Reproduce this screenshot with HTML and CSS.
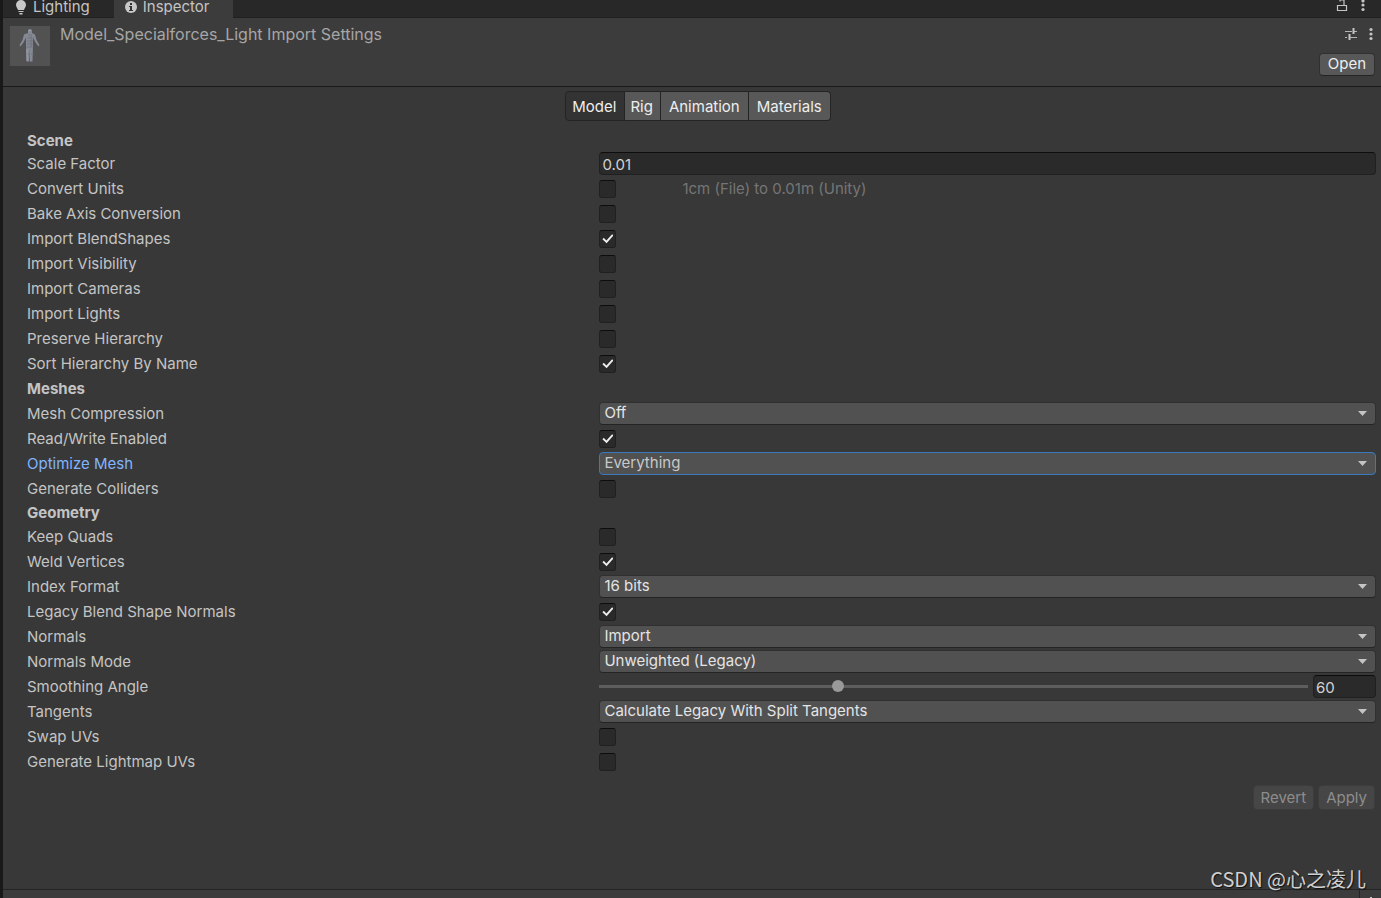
FILE: index.html
```html
<!DOCTYPE html>
<html lang="en">
<head>
    <meta charset="UTF-8">
    <meta name="viewport" content="width=device-width, initial-scale=1.0">
    <title>Inspector</title>
    <link rel="stylesheet" href="styles.css">
</head>
<body>
    <nav class="window-tabs">
        <button class="window-tab lighting">
            <svg width="12" height="16" viewBox="0 0 12 16"><path d="M6 1a5 5 0 0 0-5 5c0 2 1.500 3 2 5h6c.5-2 2-3 2-5a5 5 0 0 0-5-5zM3.500 12h5v1h-5zM4.500 14h3v1.500h-3z" fill="#c8c8c8"/></svg>
            Lighting
        </button>
        <button class="window-tab active">
            <svg width="12" height="12" viewBox="0 0 12 12"><circle cx="6" cy="6" r="6" fill="#c8c8c8"/><path d="M5 2h2v2H5zM4 5h3v4h1v1H4V9h1V6H4z" fill="#333"/></svg>
            Inspector
        </button>
        <div class="window-tools">
            <button class="icon-button" aria-label="Lock">
                <svg width="12" height="14" viewBox="0 0 12 14"><path d="M4 2.500V1h4v5M1.500 6.500h9v5h-9z" fill="none" stroke="#c4c4c4" stroke-width="1.200"/></svg>
            </button>
            <button class="icon-button" aria-label="Window menu">
                <svg width="4" height="14" viewBox="0 0 4 14"><g fill="#c4c4c4"><circle cx="2" cy="2" r="1.600"/><circle cx="2" cy="6" r="1.600"/><circle cx="2" cy="10.500" r="1.600"/></g></svg>
            </button>
        </div>
    </nav>

    <header class="asset-header">
        <svg class="preview" width="40" height="40" viewBox="0 0 40 40">
            <path d="M0 0h40v40H0z" fill="#525252"/>
            <path d="M18 7q-.5-4 2-4t2 4l3 1.500 1.500 5.500 3 5-1 1.500-3-4-2.500-5v9l-.5 15h-2.500l-.3-13-.4 13h-2.500l-.8-15v-9l-2.500 5-3 4-1-1.500 3-5 1.500-5.500z" fill="#858994"/>
            <path d="M18 9h4M17 12h6M17 15h6M17 18h6M16.500 21h7M16 28h3M21 28h3M21 10v11" stroke="#696e79" stroke-width=".8" fill="none"/>
            <path d="M18.500 4.500h2M17 23v12" stroke="#a0a4ae" fill="none"/>
        </svg>
        <h1>Model_Specialforces_Light Import Settings</h1>
        <div class="header-side">
            <div class="header-tools">
                <button class="icon-button" aria-label="Presets">
                    <svg width="12" height="12" viewBox="0 0 12 12"><path d="M0 3.500h7M9 3.500h3M0 9.500h2M5 9.500h7" stroke="#b4b4b4" fill="none"/><path d="M8.500 0v6M4.500 6v6" stroke="#c4c4c4" stroke-width="2" fill="none"/></svg>
                </button>
                <button class="icon-button" aria-label="More">
                    <svg width="4" height="14" viewBox="0 0 4 14"><g fill="#c4c4c4"><circle cx="2" cy="2.500" r="1.600"/><circle cx="2" cy="7" r="1.600"/><circle cx="2" cy="11.500" r="1.600"/></g></svg>
                </button>
            </div>
            <button class="button">Open</button>
        </div>
    </header>

    <main>
        <div class="mode-tabs">
            <button class="selected">Model</button>
            <button>Rig</button>
            <button>Animation</button>
            <button>Materials</button>
        </div>

        <form class="settings">
            <h2 class="scene">Scene</h2>
            <div class="row"><label for="scale">Scale Factor</label><input type="text" id="scale" value="0.01"></div>
            <div class="row"><label for="units">Convert Units</label><input type="checkbox" id="units"><span class="hint">1cm (File) to 0.01m (Unity)</span></div>
            <div class="row"><label for="bake">Bake Axis Conversion</label><input type="checkbox" id="bake"></div>
            <div class="row"><label for="blend">Import BlendShapes</label><input type="checkbox" id="blend" checked></div>
            <div class="row"><label for="visibility">Import Visibility</label><input type="checkbox" id="visibility"></div>
            <div class="row"><label for="cameras">Import Cameras</label><input type="checkbox" id="cameras"></div>
            <div class="row"><label for="lights">Import Lights</label><input type="checkbox" id="lights"></div>
            <div class="row"><label for="preserve">Preserve Hierarchy</label><input type="checkbox" id="preserve"></div>
            <div class="row"><label for="sort">Sort Hierarchy By Name</label><input type="checkbox" id="sort" checked></div>

            <h2 class="meshes">Meshes</h2>
            <div class="row"><label for="compression">Mesh Compression</label><div class="dropdown"><select id="compression"><option>Off</option><option>Low</option><option>Medium</option><option>High</option></select></div></div>
            <div class="row"><label for="readwrite">Read/Write Enabled</label><input type="checkbox" id="readwrite" checked></div>
            <div class="row focused"><label for="optimize">Optimize Mesh</label><div class="dropdown"><select id="optimize"><option>Everything</option><option>Nothing</option></select></div></div>
            <div class="row"><label for="colliders">Generate Colliders</label><input type="checkbox" id="colliders"></div>

            <h2 class="geometry">Geometry</h2>
            <div class="row"><label for="quads">Keep Quads</label><input type="checkbox" id="quads"></div>
            <div class="row"><label for="weld">Weld Vertices</label><input type="checkbox" id="weld" checked></div>
            <div class="row"><label for="index">Index Format</label><div class="dropdown"><select id="index"><option>16 bits</option><option>32 bits</option></select></div></div>
            <div class="row"><label for="legacy">Legacy Blend Shape Normals</label><input type="checkbox" id="legacy" checked></div>
            <div class="row"><label for="normals">Normals</label><div class="dropdown"><select id="normals"><option>Import</option><option>Calculate</option><option>None</option></select></div></div>
            <div class="row"><label for="mode">Normals Mode</label><div class="dropdown"><select id="mode"><option>Unweighted (Legacy)</option><option>Unweighted</option></select></div></div>
            <div class="row"><label for="angle">Smoothing Angle</label><input type="range" id="angle" min="0" max="180" value="60"><input type="text" class="number" aria-label="Smoothing Angle value" value="60"></div>
            <div class="row"><label for="tangents">Tangents</label><div class="dropdown"><select id="tangents"><option>Calculate Legacy With Split Tangents</option><option>None</option></select></div></div>
            <div class="row"><label for="swap">Swap UVs</label><input type="checkbox" id="swap"></div>
            <div class="row"><label for="lightmap">Generate Lightmap UVs</label><input type="checkbox" id="lightmap"></div>

            <div class="actions">
                <button type="button" class="button" disabled>Revert</button>
                <button type="button" class="button" disabled>Apply</button>
            </div>
        </form>
    </main>

    <footer class="preview-bar"><div class="preview-menu"></div></footer>
    <div class="watermark">CSDN @心之凌儿</div>
</body>
</html>
```
FILE: styles.css
```css
* {
    box-sizing: border-box;
}

body {
    margin: 0;
    min-height: 100vh;
    display: flex;
    flex-direction: column;
    position: relative;
    border-left: 3px solid #191919;
    background: #383838;
    color: #c4c4c4;
    font-family: Inter, "Noto Sans", sans-serif;
    font-size: 15px;
    line-height: 20px;
}

button, input, select {
    font: inherit;
    color: inherit;
    margin: 0;
}

svg {
    display: block;
    flex: none;
}

h1, h2 {
    margin: 0;
    font-size: 15px;
}

/* Window tabs */
.window-tabs {
    display: flex;
    height: 18px;
    background: #282828;
    box-shadow: inset 0 -1px #202020;
}

.window-tab {
    display: flex;
    align-items: center;
    gap: 6px;
    height: 18px;
    padding: 0 23px 4px 11px;
    border: none;
    background: none;
    line-height: 14px;
}

.window-tab.lighting {
    padding: 0 24px 4px 12px;
}

.window-tab.active {
    background: #3c3c3c;
}

.window-tools {
    display: flex;
    gap: 13px;
    margin-left: auto;
    padding-right: 16px;
}

.icon-button {
    display: flex;
    align-items: center;
    padding: 0;
    border: none;
    background: none;
}

.window-tools .icon-button {
    height: 12px;
}

/* Asset header */
.asset-header {
    display: flex;
    align-items: flex-start;
    height: 69px;
    padding: 8px 6px 0 7px;
    background: #3c3c3c;
    border-bottom: 1px solid #1a1a1a;
}

.asset-header h1 {
    flex: 1;
    margin-left: 10px;
    font-size: 16px;
    font-weight: 400;
    line-height: 17px;
    color: #a6a6a6;
}

.header-side {
    display: flex;
    flex-direction: column;
    align-items: flex-end;
    gap: 11px;
}

.header-tools {
    display: flex;
    align-items: center;
    gap: 12px;
    height: 16px;
    padding-right: 2px;
}

.button {
    height: 23px;
    padding: 0 8px 1px;
    border: 1px solid #303030;
    border-bottom-color: #242424;
    border-radius: 4px;
    background: #585858;
    color: #eee;
    line-height: 20px;
}

.button:disabled {
    padding: 0 7px;
    border-color: #3c3c3c;
    background: #464646;
    color: #8d8d8d;
}

/* Import modes */
main {
    flex: 1;
}

.mode-tabs {
    display: flex;
    justify-content: center;
    padding: 4px 0 9px 12px;
}

.mode-tabs button {
    height: 30px;
    padding: 2px 8px 0;
    border: 1px solid #242424;
    border-left-width: 0;
    background: #585858;
    color: #eee;
}

.mode-tabs button:first-child {
    padding: 2px 8px 0 6px;
    border-left-width: 1px;
    border-radius: 4px 0 0 4px;
}

.mode-tabs button:nth-child(2) {
    padding: 2px 7px 0 5px;
}

.mode-tabs button:last-child {
    border-radius: 0 4px 4px 0;
}

.mode-tabs .selected {
    background: #333;
}

/* Settings */
.settings {
    padding: 0 5px 0 24px;
}

h2 {
    line-height: 25px;
}

h2.scene {
    line-height: 21px;
}

h2.geometry {
    line-height: 23px;
}

.row {
    display: flex;
    align-items: center;
    height: 25px;
}

.row label {
    flex: none;
    width: calc(45vw - 49px);
}

input[type="text"] {
    flex: 1;
    min-width: 0;
    height: 23px;
    padding: 1px 3px 0 2px;
    border: 1px solid #202020;
    border-top-color: #0d0d0d;
    border-radius: 4px;
    background: #2a2a2a;
    color: #d2d2d2;
}

input[type="checkbox"] {
    appearance: none;
    display: grid;
    place-items: center;
    width: 17px;
    height: 18px;
    border: 1px solid #202020;
    border-top-color: #0d0d0d;
    border-radius: 3px;
    background: #2a2a2a;
}

input[type="checkbox"]:checked::before {
    content: '';
    width: 11px;
    height: 10px;
    background: #eee;
    clip-path: polygon(0 57%, 12% 43%, 36% 70%, 88% 7%, 100% 19%, 38% 98%);
}

.hint {
    margin-left: 66px;
    color: #757575;
}

.dropdown {
    flex: 1;
    display: flex;
    position: relative;
}

.dropdown::after {
    content: '';
    position: absolute;
    top: 9px;
    right: 9px;
    width: 9px;
    height: 5px;
    background: #c4c4c4;
    clip-path: polygon(0 0, 100% 0, 50% 100%);
    pointer-events: none;
}

select {
    appearance: none;
    flex: 1;
    height: 23px;
    padding: 0 24px 1px 4px;
    border: 1px solid #303030;
    border-bottom-color: #242424;
    border-radius: 4px;
    background: #515151;
    color: #e4e4e4;
    outline: none;
}

.focused label {
    color: #81b4ff;
}

.focused select {
    border-color: #3a79bb;
    color: #c8c8c8;
}

input[type="range"] {
    appearance: none;
    flex: 1;
    height: 12px;
    background: none;
}

input[type="range"]::-webkit-slider-runnable-track {
    height: 3px;
    background: #5e5e5e;
}

input[type="range"]::-webkit-slider-thumb {
    appearance: none;
    width: 12px;
    height: 12px;
    margin-top: -5px;
    border-radius: 50%;
    background: #999;
}

input.number {
    flex: none;
    width: 63px;
    margin-left: 5px;
}

.actions {
    display: flex;
    justify-content: flex-end;
    gap: 4px;
    padding: 11px 1px 0 0;
}

.actions .button {
    height: 25px;
}

/* Collapsed preview pane */
.preview-bar {
    display: flex;
    justify-content: flex-end;
    height: 9px;
    border-top: 1px solid #242424;
    background: #3c3c3c;
}

.preview-menu {
    width: 22px;
    border-left: 1px solid #242424;
}

.preview-menu::before {
    content: '';
    display: block;
    width: 2px;
    height: 1px;
    margin: 7px 0 0 10px;
    background: #c4c4c4;
}

.watermark {
    position: absolute;
    right: 15px;
    bottom: 6px;
    font-family: "Noto Sans CJK SC", sans-serif;
    font-size: 20px;
    line-height: 26px;
    color: #d0d0d0;
    text-shadow: 1px 1px 1px #111;
}
```
